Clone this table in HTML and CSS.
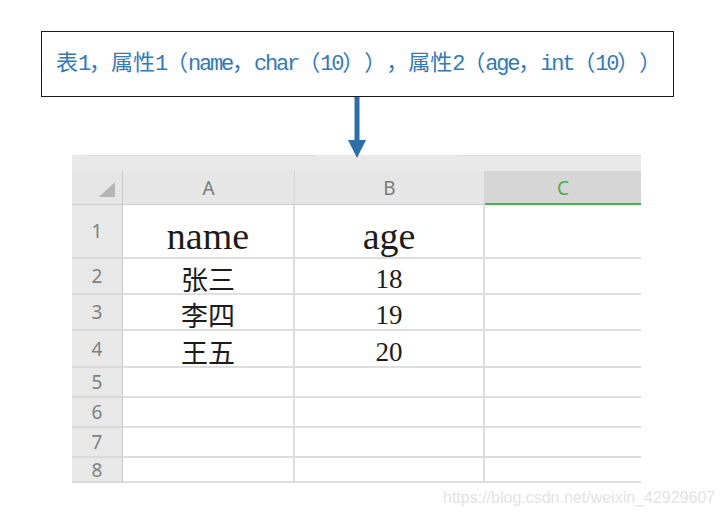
FILE: index.html
```html
<!DOCTYPE html>
<html lang="zh">
<head>
<meta charset="utf-8">
<title>表结构示例</title>
<link rel="stylesheet" href="styles.css">
</head>
<body>
<div class="page">
  <div class="note">表<span class="lat">1</span>，属性<span class="lat">1</span>（<span class="lat">name</span>，<span class="lat">char</span>（<span class="lat">10</span>）），属性<span class="lat">2</span>（<span class="lat">age</span>，<span class="lat">int</span>（<span class="lat">10</span>））</div>
  <div class="arrow">
    <svg width="20" height="61" viewBox="0 0 20 61" aria-hidden="true">
      <rect x="7.5" y="0" width="5" height="44" fill="#2b6ea8"/>
      <polygon points="1,43 19,43 10,61" fill="#2b6ea8"/>
    </svg>
  </div>
  <div class="sheet">
    <div class="tabs"><span class="tab t1"></span><span class="tab t2"></span></div>

    <div class="hdr corner"><span class="tri"></span></div>
    <div class="hdr colh">A</div>
    <div class="hdr colh">B</div>
    <div class="hdr colh sel">C</div>

    <div class="rowh">1</div>
    <div class="cell big">name</div>
    <div class="cell big">age</div>
    <div class="cell last"></div>

    <div class="rowh">2</div>
    <div class="cell cjk">张三</div>
    <div class="cell num">18</div>
    <div class="cell last"></div>

    <div class="rowh">3</div>
    <div class="cell cjk">李四</div>
    <div class="cell num">19</div>
    <div class="cell last"></div>

    <div class="rowh">4</div>
    <div class="cell cjk">王五</div>
    <div class="cell num">20</div>
    <div class="cell last"></div>

    <div class="rowh">5</div>
    <div class="cell"></div>
    <div class="cell"></div>
    <div class="cell last"></div>

    <div class="rowh">6</div>
    <div class="cell"></div>
    <div class="cell"></div>
    <div class="cell last"></div>

    <div class="rowh">7</div>
    <div class="cell"></div>
    <div class="cell"></div>
    <div class="cell last"></div>

    <div class="rowh">8</div>
    <div class="cell"></div>
    <div class="cell"></div>
    <div class="cell last"></div>
  </div>
  <div class="watermark">https://blog.csdn.net/weixin_42929607</div>
</div>
</body>
</html>
```

FILE: styles.css
```css
html, body {
  margin: 0;
  padding: 0;
  background: #ffffff;
}

.page {
  position: relative;
  width: 724px;
  height: 516px;
  overflow: hidden;
  display: flex;
  flex-direction: column;
  align-items: flex-start;
}

.note {
  box-sizing: border-box;
  margin: 31px 0 0 41px;
  width: 633px;
  height: 66px;
  border: 1px solid #1a1a1a;
  padding-left: 14px;
  padding-top: 1px;
  display: flex;
  align-items: center;
  font-family: "Liberation Mono", "Noto Sans CJK SC", monospace;
  font-size: 22px;
  line-height: 1;
  color: #3379b8;
  white-space: nowrap;
  text-spacing-trim: space-all;
}

.lat {
  letter-spacing: -2.2px;
}

.arrow {
  margin-left: 347px;
  height: 61px;
  margin-bottom: -3px;
  position: relative;
  z-index: 2;
}

.arrow svg {
  display: block;
}

.sheet {
  margin-left: 72px;
  width: 569px;
  height: 328px;
  overflow: hidden;
  display: grid;
  grid-template-columns: 51px 172px 190px 156px;
  grid-template-rows: 16px 34px 54px 36px 36px 37px 30px 30px 30px 25px;
  font-family: "Noto Sans", "Open Sans", sans-serif;
}

.tabs {
  grid-column: 1 / -1;
  background: #e9e9e9;
  display: flex;
  align-items: flex-start;
}

.tab {
  display: block;
  height: 2px;
  border-top: 1px solid #d9d9d9;
  border-radius: 5px 5px 0 0;
}

.t1 {
  margin-left: 14px;
  width: 230px;
}

.t2 {
  margin-left: 141px;
  flex: 1;
  border-top-right-radius: 0;
}

.hdr {
  box-sizing: border-box;
  background: #e6e6e6;
  border-bottom: 1px solid #cdcdcd;
  display: flex;
  align-items: center;
  justify-content: center;
  font-size: 19px;
  color: #7a7a7a;
  padding-top: 1px;
}

.corner {
  border-right: 1px solid #c9c9c9;
  position: relative;
}

.tri {
  position: absolute;
  left: 27px;
  top: 11px;
  width: 0;
  height: 0;
  border-left: 16px solid transparent;
  border-bottom: 15px solid #b5b5b5;
}

.colh {
  border-right: 1px solid #d6d6d6;
}

.colh.sel {
  background: #d6d6d6;
  color: #4dae4f;
  border-right: none;
  border-bottom: 2px solid #4caf50;
}

.rowh {
  box-sizing: border-box;
  background: #e8e8e8;
  border-right: 1px solid #c9c9c9;
  border-bottom: 2px solid #d9d9d9;
  display: flex;
  align-items: center;
  justify-content: center;
  font-size: 19px;
  color: #7f7f7f;
  line-height: 1;
  padding-top: 1px;
}

.cell {
  box-sizing: border-box;
  border-right: 2px solid #dedede;
  border-bottom: 2px solid #dedede;
  display: flex;
  align-items: flex-end;
  justify-content: center;
  line-height: 1;
  color: #1c1c1c;
  white-space: nowrap;
}

.cell.last {
  border-right: none;
}

.big {
  font-family: "Liberation Serif", serif;
  font-size: 38px;
  padding-bottom: 2px;
}

.num {
  font-family: "Liberation Serif", serif;
  font-size: 27px;
}

.cjk {
  font-family: "Noto Sans CJK SC", sans-serif;
  font-size: 27px;
  padding-bottom: 1px;
}

.watermark {
  position: absolute;
  left: 443px;
  top: 489px;
  font-family: "Liberation Sans", Arial, sans-serif;
  font-size: 16px;
  color: #e3e3e3;
  white-space: nowrap;
}
```
